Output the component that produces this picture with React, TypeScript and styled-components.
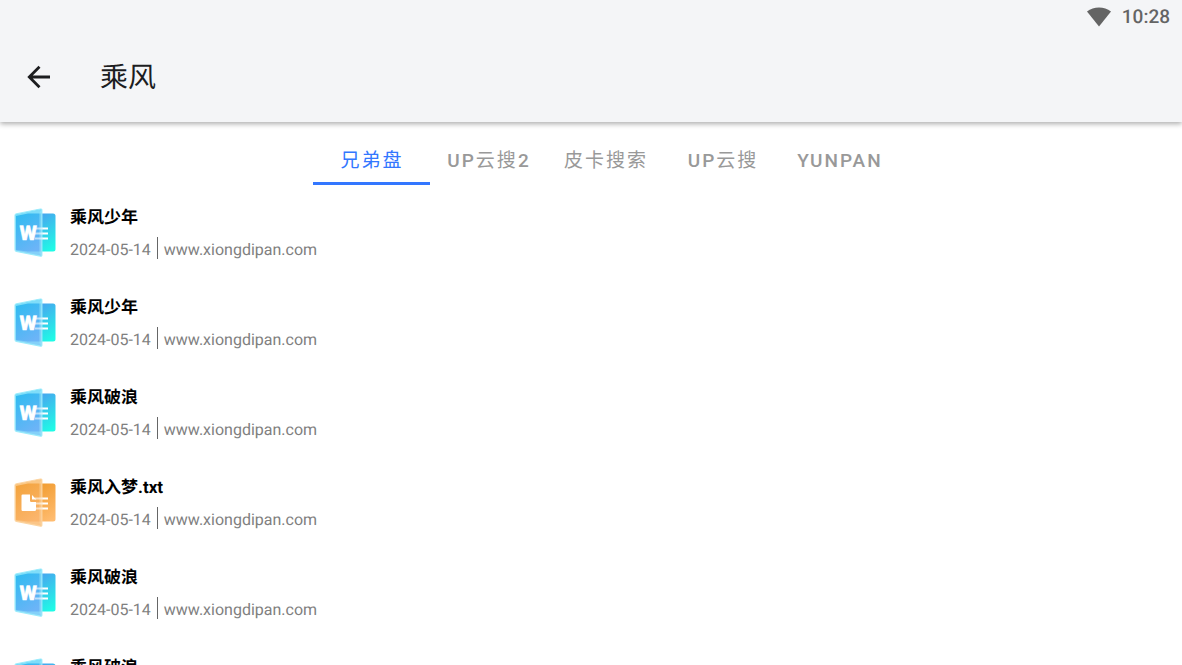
import React, { useState } from "react";
import styled, { createGlobalStyle } from "styled-components";

const GlobalStyle = createGlobalStyle`
  * { box-sizing: border-box; }
  body {
    margin: 0;
    background: #fff;
    font-family: Roboto, "Noto Sans CJK SC", sans-serif;
    text-rendering: geometricPrecision;
  }
`;

const Page = styled.div`
  display: flex;
  flex-direction: column;
  height: 100vh;
  overflow: hidden;
`;

const Header = styled.header`
  flex: none;
  background: #f4f5f7;
  box-shadow: 0 2px 5px rgba(0, 0, 0, 0.32);
`;

const StatusBar = styled.div`
  display: flex;
  justify-content: flex-end;
  align-items: center;
  gap: 10px;
  height: 34px;
  padding: 0 12px;
  color: #646464;
`;

const Clock = styled.time`
  font-size: 19px;
  line-height: 34px;
  font-weight: 500;
`;

const Toolbar = styled.div`
  display: flex;
  align-items: center;
  gap: 32px;
  height: 88px;
  padding: 0 10px 2px;
  color: #1c1d1f;
`;

const BackButton = styled.button`
  display: grid;
  place-items: center;
  width: 58px;
  height: 58px;
  padding: 0;
  border: 0;
  background: none;
  color: inherit;
`;

const Title = styled.h1`
  margin: 0;
  padding-top: 2px;
  font-size: 28px;
  line-height: 40px;
  font-weight: 400;
`;

const Tabs = styled.nav`
  display: flex;
  flex: none;
  justify-content: center;
  padding: 14px 0 0 28px;
`;

const Tab = styled.button<{ $active: boolean }>`
  width: 117px;
  height: 49px;
  padding: 4px 0 0 2px;
  border: 0;
  border-bottom: 3px solid ${(p) => (p.$active ? "#3377ff" : "transparent")};
  background: none;
  color: ${(p) => (p.$active ? "#3377ff" : "#999")};
  font-family: inherit;
  font-size: 19px;
  line-height: 28px;
  font-weight: 400;
  letter-spacing: 2px;
  white-space: nowrap;
`;

const Latin = styled.span`
  font-weight: 500;
`;

const List = styled.ul`
  flex: 1;
  min-height: 0;
  margin: 0;
  padding: 3px 0 0;
  overflow-y: auto;
  scrollbar-width: none;
  list-style: none;
`;

const Row = styled.li`
  display: flex;
  align-items: center;
  gap: 14px;
  height: 90px;
  padding: 0 14px;
`;

const Details = styled.div`
  display: flex;
  flex-direction: column;
  gap: 5px;
  padding-top: 1px;
`;

const Name = styled.h2`
  margin: 0;
  color: #000;
  font-size: 17px;
  line-height: 28px;
  font-weight: 700;
`;

const Meta = styled.div`
  display: flex;
  align-items: center;
  gap: 6px;
  color: #808080;
  font-size: 16px;
  line-height: 24px;
`;

const Divider = styled.span`
  width: 1px;
  height: 22px;
  margin-bottom: 4px;
  background: #666;
`;

type Kind = "word" | "text";

const palettes = {
  word: { back: ["#4b9df0", "#1ffbe6"], front: ["#26bcf0", "#6cb4f7"], edge: "#9becfc" },
  text: { back: ["#f09a2c", "#ffbc70"], front: ["#f2a136", "#fbb56c"], edge: "#fcd5a2" },
};

function FileIcon({ kind, id }: { kind: Kind; id: string }) {
  const c = palettes[kind];
  return (
    <svg width="42" height="50" viewBox="0 0 42 50" aria-hidden="true">
      <defs>
        <linearGradient id={`b${id}`} x1="0.3" y1="0" x2="0.8" y2="1">
          <stop offset="0" stopColor={c.back[0]} />
          <stop offset="1" stopColor={c.back[1]} />
        </linearGradient>
        <linearGradient id={`f${id}`} x1="0" y1="0" x2="0.4" y2="1">
          <stop offset="0" stopColor={c.front[0]} />
          <stop offset="1" stopColor={c.front[1]} />
        </linearGradient>
      </defs>
      <rect x="14" y="5.5" width="27.5" height="38" rx="2.5" fill={`url(#b${id})`} />
      <path
        d="M2.4 5.9 26.4 1.1Q27.8.9 27.8 2.3V47Q27.8 48.4 26.4 48.1L2.4 43.3Q1.1 43 1.1 41.8V7.3Q1.1 6.2 2.4 5.9Z"
        fill={`url(#f${id})`}
        stroke={c.edge}
        strokeWidth="1.3"
      />
      <path d="M2 6.6 27.2 1.5V5.5L14 5.6 2 8Z" fill={c.edge} opacity=".7" />
      <path d="M25.4 5V45L27.2 48V2Z" fill={c.edge} opacity=".5" />
      <path d="M2 42 14 43.5H27.2V48L2 43Z" fill={c.edge} opacity=".5" />
      <path d="M21 20.4h7.5M21 25.4h7.5M21 30.4h7.5" stroke="#fff" strokeWidth="2" opacity=".6" />
      <path d="M28.3 20.4H34M28.3 25.4H34M28.3 30.4H34" stroke="#fff" strokeWidth="2" />
      {kind === "word" ? (
        <text x="5.6" y="32.4" fill="#fff" stroke="#fff" strokeWidth=".4" fontFamily="Roboto, sans-serif" fontSize="20" fontWeight="900">
          W
        </text>
      ) : (
        <>
          <path d="M8.7 16.4H16V22.7Q16 23.9 17.2 23.9H22V31.8Q22 33 20.8 33H8.7Q7.5 33 7.5 31.8V17.6Q7.5 16.4 8.7 16.4Z" fill="#fff" />
          <path d="M18 17V21.6H22.4Z" fill="#fff" />
        </>
      )}
    </svg>
  );
}

const tabs = [
  { latin: "", han: "兄弟盘" },
  { latin: "UP", han: "云搜", tail: "2" },
  { latin: "", han: "皮卡搜索" },
  { latin: "UP", han: "云搜" },
  { latin: "YUNPAN", han: "" },
];

const files: { name: string; kind: Kind }[] = [
  { name: "乘风少年", kind: "word" },
  { name: "乘风少年", kind: "word" },
  { name: "乘风破浪", kind: "word" },
  { name: "乘风入梦.txt", kind: "text" },
  { name: "乘风破浪", kind: "word" },
  { name: "乘风破浪", kind: "word" },
];

export default function App() {
  const [active, setActive] = useState(0);
  return (
    <Page lang="zh-CN">
      <GlobalStyle />
      <Header>
        <StatusBar>
          <svg width="26" height="20" viewBox="0 0 26 20" aria-hidden="true">
            <path d="M1 4.6Q6.3.6 13 .6T25 4.6L13 19.4Z" fill="currentColor" />
          </svg>
          <Clock>10:28</Clock>
        </StatusBar>
        <Toolbar>
          <BackButton aria-label="返回">
            <svg width="24" height="24" viewBox="0 0 24 24" fill="none" stroke="currentColor" strokeWidth="2.8" aria-hidden="true">
              <path d="M23 12H3M12.5 1.8 2.3 12 12.5 22.2" />
            </svg>
          </BackButton>
          <Title>乘风</Title>
        </Toolbar>
      </Header>
      <Tabs>
        {tabs.map((tab, i) => (
          <Tab key={i} $active={i === active} onClick={() => setActive(i)}>
            {tab.latin && <Latin>{tab.latin}</Latin>}
            {tab.han}
            {tab.tail && <Latin>{tab.tail}</Latin>}
          </Tab>
        ))}
      </Tabs>
      <List>
        {files.map((file, i) => (
          <Row key={i}>
            <FileIcon kind={file.kind} id={String(i)} />
            <Details>
              <Name>{file.name}</Name>
              <Meta>
                <span>2024-05-14</span>
                <Divider />
                <span>www.xiongdipan.com</span>
              </Meta>
            </Details>
          </Row>
        ))}
      </List>
    </Page>
  );
}
